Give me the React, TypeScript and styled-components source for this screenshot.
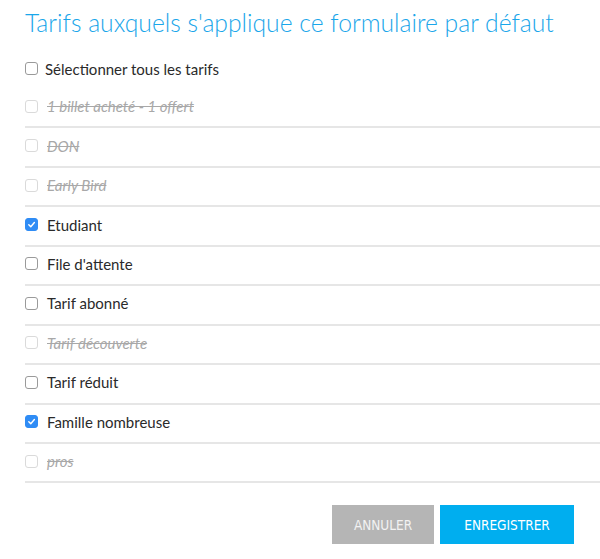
import React, { useState } from "react";
import styled, { createGlobalStyle } from "styled-components";

const GlobalStyle = createGlobalStyle`
  html, body {
    margin: 0;
    padding: 0;
    background: #fff;
  }
  body {
    font-family: Lato, "Open Sans", sans-serif;
    -webkit-font-smoothing: antialiased;
  }
`;

const Page = styled.div`
  width: 600px;
  height: 559px;
  box-sizing: border-box;
  padding: 8px 0 0 25px;
  overflow: hidden;
`;

const Title = styled.h1`
  margin: 0;
  font-family: Lato, sans-serif;
  font-weight: 300;
  font-size: 24.7px;
  line-height: 30px;
  color: #1aa6ea;
  white-space: nowrap;
`;

const SelectAll = styled.label`
  display: flex;
  align-items: center;
  gap: 7px;
  height: 38px;
  margin-top: 13px;
  padding-bottom: 3px;
  box-sizing: border-box;
  font-family: Lato, sans-serif;
  font-size: 15px;
  color: #2a2a2a;
  cursor: pointer;
`;

const List = styled.ul`
  list-style: none;
  margin: 0;
  padding: 0;
`;

const Row = styled.li<{ $disabled?: boolean }>`
  display: flex;
  align-items: center;
  gap: 9px;
  box-sizing: border-box;
  height: 39.44px;
  padding-bottom: 3px;
  border-bottom: 2px solid #e6e6e6;
  font-family: Lato, sans-serif;
  font-size: 15px;
  color: ${(p) => (p.$disabled ? "#a8a8a8" : "#2a2a2a")};
  font-style: ${(p) => (p.$disabled ? "italic" : "normal")};
  text-decoration: ${(p) => (p.$disabled ? "line-through" : "none")};
`;

const Box = styled.span<{ $checked?: boolean; $disabled?: boolean }>`
  flex: none;
  display: inline-flex;
  align-items: center;
  justify-content: center;
  width: 13px;
  height: 13px;
  box-sizing: border-box;
  border-radius: 3px;
  border: 1px solid
    ${(p) => (p.$checked ? "#2f8cf5" : p.$disabled ? "#dadada" : "#9a9a9a")};
  background: ${(p) => (p.$checked ? "#2f8cf5" : "#fff")};
  cursor: ${(p) => (p.$disabled ? "default" : "pointer")};
`;

const Actions = styled.div`
  display: flex;
  justify-content: flex-end;
  gap: 6px;
  margin-top: 22px;
  padding-right: 26px;
`;

const Button = styled.button<{ $primary?: boolean }>`
  height: 39px;
  padding: 0;
  width: ${(p) => (p.$primary ? "134px" : "102px")};
  border: none;
  background: ${(p) => (p.$primary ? "#00aeef" : "#b5b5b5")};
  color: ${(p) => (p.$primary ? "#fff" : "#f2f2f2")};
  font-family: "DejaVu Sans Condensed", "Liberation Sans Narrow", sans-serif;
  font-size: 13.5px;
  text-transform: uppercase;
  cursor: pointer;
`;

type Tarif = { name: string; disabled?: boolean };

const TARIFS: Tarif[] = [
  { name: "1 billet acheté - 1 offert", disabled: true },
  { name: "DON", disabled: true },
  { name: "Early Bird", disabled: true },
  { name: "Etudiant" },
  { name: "File d'attente" },
  { name: "Tarif abonné" },
  { name: "Tarif découverte", disabled: true },
  { name: "Tarif réduit" },
  { name: "Famille nombreuse" },
  { name: "pros", disabled: true },
];

const Check = ({ checked, disabled, onClick }: { checked: boolean; disabled?: boolean; onClick?: () => void }) => (
  <Box $checked={checked} $disabled={disabled} onClick={disabled ? undefined : onClick}>
    {checked && (
      <svg width="9" height="9" viewBox="0 0 10 10">
        <path d="M2 5.3 L4.2 7.4 L8.2 2.8" fill="none" stroke="#fff" strokeWidth="1.6" strokeLinecap="round" strokeLinejoin="round" />
      </svg>
    )}
  </Box>
);

const App = () => {
  const [checked, setChecked] = useState<Record<string, boolean>>({
    Etudiant: true,
    "Famille nombreuse": true,
  });

  const toggle = (name: string) => setChecked((c) => ({ ...c, [name]: !c[name] }));

  return (
    <Page>
      <GlobalStyle />
      <Title>Tarifs auxquels s'applique ce formulaire par défaut</Title>
      <SelectAll>
        <Check checked={false} />
        Sélectionner tous les tarifs
      </SelectAll>
      <List>
        {TARIFS.map((t) => (
          <Row key={t.name} $disabled={t.disabled}>
            <Check checked={!!checked[t.name]} disabled={t.disabled} onClick={() => toggle(t.name)} />
            {t.name}
          </Row>
        ))}
      </List>
      <Actions>
        <Button type="button">Annuler</Button>
        <Button type="button" $primary>
          Enregistrer
        </Button>
      </Actions>
    </Page>
  );
};

export default App;
